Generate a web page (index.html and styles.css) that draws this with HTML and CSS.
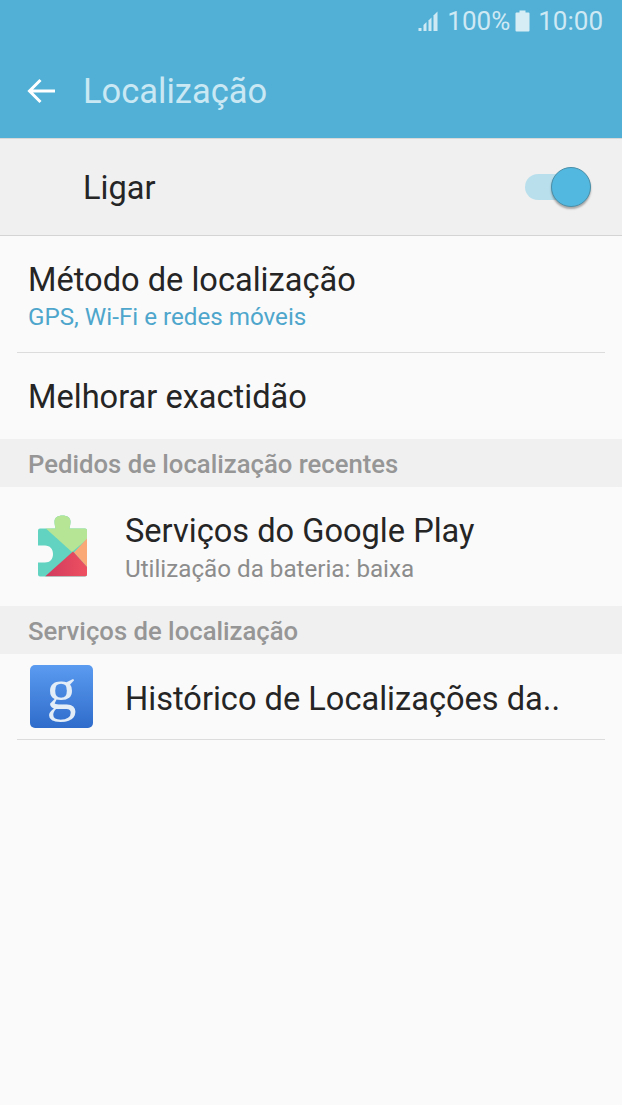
FILE: index.html
```html
<!DOCTYPE html>
<html lang="pt">
<head>
  <meta charset="UTF-8" />
  <title>Localização</title>
  <link rel="stylesheet" href="styles.css">
</head>
<body>
  <div id="screen">
    <div class="appbar">
      <div class="status">
        <svg class="signal" width="22" height="22" viewBox="0 0 22 22">
          <rect x="0.5" y="18" width="3" height="3" fill="#cfe9f4"/>
          <path d="M5.500 15l3-3v9h-3z" fill="#cfe9f4"/>
          <path d="M10.500 10.500l3-3V21h-3z" fill="#cfe9f4"/>
          <path d="M15.500 5.500L19.500 1.500V21h-4z" fill="#cfe9f4"/>
        </svg>
        <span class="pct">100%</span>
        <svg class="batt" width="15" height="22" viewBox="0 0 15 22">
          <path d="M4.500 0.500h6v2h3a1 1 0 0 1 1 1v17a1 1 0 0 1-1 1h-12a1 1 0 0 1-1-1v-17a1 1 0 0 1 1-1h3z" fill="#d6edf6"/>
        </svg>
        <span class="clock">10:00</span>
      </div>
      <div class="titlebar">
        <svg class="back" width="30" height="30" viewBox="0 0 30 30">
          <path d="M28 15H3M13.500 4L2.500 15l11 11" fill="none" stroke="#fff" stroke-width="3"/>
        </svg>
        <span class="title">Localização</span>
      </div>
    </div>

    <div class="master">
      <span class="master-label">Ligar</span>
      <div class="switch"><div class="track"></div><div class="thumb"></div></div>
    </div>

    <div class="item two-line divided">
      <div class="item-main">Método de localização</div>
      <div class="item-sub accent">GPS, Wi-Fi e redes móveis</div>
    </div>
    <div class="item one-line">
      <div class="item-main">Melhorar exactidão</div>
    </div>

    <div class="section">Pedidos de localização recentes</div>
    <div class="app-row tall">
      <svg class="app-icon" width="64" height="64" viewBox="0 0 64 64">
        <defs>
          <clipPath id="piece">
            <path d="M12 13.500H27.500C27 11 26.500 9 26.500 6.500C26.500 2.500 30 .5 34.500 .5C39 .5 42.500 2.500 42.500 6.500C42.500 9 42 11 41.500 13.500H57a2 2 0 0 1 2 2V59.500a2 2 0 0 1-2 2H12a2 2 0 0 1-2-2V47.500H17C22 47.500 25 44 25 39C25 34 22 30.500 17 30.500H10V15.500a2 2 0 0 1 2-2z"/>
          </clipPath>
          <linearGradient id="red" x1="0" y1="0" x2="1" y2="0">
            <stop offset="0" stop-color="#cf3a5e"/>
            <stop offset="1" stop-color="#ee5060"/>
          </linearGradient>
        </defs>
        <g clip-path="url(#piece)">
          <rect width="64" height="64" fill="#62d3c0"/>
          <path d="M14 0H64V20L44 37 14 10z" fill="#b7e596"/>
          <path d="M59 23.500L46 37.500 59 52z" fill="#fba877"/>
          <path d="M17 61.500L45 36.500 59 52V61.500z" fill="url(#red)"/>
        </g>
      </svg>
      <div class="app-text">
        <div class="item-main">Serviços do Google Play</div>
        <div class="item-sub muted">Utilização da bateria: baixa</div>
      </div>
    </div>

    <div class="section">Serviços de localização</div>
    <div class="app-row short divided">
      <div class="g-icon"><span class="g-letter">g</span></div>
      <div class="app-text">
        <div class="item-main">Histórico de Localizações da..</div>
      </div>
    </div>
  </div>
</body>
</html>
```

FILE: styles.css
```css
html, body {
  margin: 0;
  padding: 0;
}
body {
  background: #fafafa;
  font-family: Roboto, 'Liberation Sans', sans-serif;
  color: #252525;
}
#screen {
  width: 622px;
  height: 1105px;
  overflow: hidden;
  background: #fafafa;
}
.appbar {
  height: 138px;
  background: #52b0d6;
  border-bottom: 1px solid #d8d8d8;
}
.status {
  height: 42px;
  display: flex;
  align-items: center;
  justify-content: flex-end;
  padding-right: 19px;
  color: #cfe9f4;
  font-size: 26px;
}
.signal {
  margin-right: 7px;
}
.batt {
  margin: 0 8px 0 5px;
}
.titlebar {
  height: 94px;
  margin-top: 2px;
  display: flex;
  align-items: center;
  padding-left: 27px;
}
.back {
  margin-right: 26px;
}
.title {
  font-size: 34.5px;
  color: #c9e8f4;
}
.master {
  height: 96px;
  background: #f0f0f0;
  border-bottom: 1px solid #d4d4d4;
  display: flex;
  align-items: center;
  justify-content: space-between;
  padding: 0 31px 0 83px;
}
.master-label {
  font-size: 32.6px;
  padding-top: 2px;
}
.switch {
  position: relative;
  width: 66px;
  height: 40px;
}
.track {
  position: absolute;
  left: 0;
  top: 7px;
  width: 50px;
  height: 26px;
  border-radius: 13px;
  background: #b9dfec;
}
.thumb {
  position: absolute;
  right: 0;
  top: 0;
  width: 38px;
  height: 38px;
  border-radius: 50%;
  background: #52b8e0;
  border: 1px solid #4a8fa8;
  box-shadow: 0 2px 2px rgba(0, 0, 0, 0.3);
}
.item {
  margin: 0 17px;
  padding: 0 11px;
}
.two-line {
  height: 117px;
  padding-top: 24px;
  box-sizing: border-box;
}
.one-line {
  height: 86px;
  padding-top: 2px;
  box-sizing: border-box;
  display: flex;
  align-items: center;
}
.divided {
  border-bottom: 1px solid #dcdcdc;
}
.item-main {
  font-size: 32.6px;
  line-height: 40px;
}
.item-sub {
  font-size: 24.2px;
  line-height: 36px;
}
.accent {
  color: #4ea6cc;
  line-height: 34px;
}
.muted {
  color: #8c8c8c;
}
.section {
  height: 48px;
  background: #f0f0f0;
  color: #969696;
  font-size: 25.7px;
  font-weight: 500;
  line-height: 50px;
  padding-left: 28px;
}
.app-row {
  display: flex;
  align-items: center;
}
.app-text {
  padding-top: 5px;
}
.tall {
  height: 119px;
  padding-left: 28px;
}
.short {
  height: 85px;
  margin: 0 17px;
  padding-left: 13px;
}
.app-icon {
  flex: none;
  margin-right: 33px;
}
.g-icon {
  flex: none;
  width: 63px;
  height: 63px;
  margin-right: 32px;
  border-radius: 5px;
  background: linear-gradient(#5b9bf0, #2f6ccb);
  display: flex;
  align-items: center;
  justify-content: center;
}
.g-letter {
  font-family: 'Liberation Serif', serif;
  font-size: 60px;
  line-height: 63px;
  padding-bottom: 14px;
  color: #e3edf8;
}
```
